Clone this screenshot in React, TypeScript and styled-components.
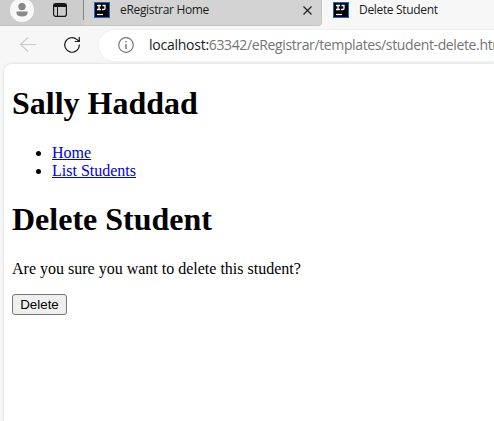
import React from "react";
import styled, { createGlobalStyle } from "styled-components";

const GlobalStyle = createGlobalStyle`
  body { margin: 0; background: #f7f7f7; overflow: hidden; }
`;

const Browser = styled.div`
  width: 494px;
  height: 421px;
  overflow: hidden;
  display: flex;
  flex-direction: column;
  background: #f7f7f7;
  font-family: "Open Sans", "Noto Sans", sans-serif;
  svg { display: block; flex: none; }
`;

const TabStrip = styled.div`
  display: flex;
  height: 26px;
  flex: none;
  background: #f7f7f7;
`;

const StripTools = styled.div`
  box-sizing: border-box;
  display: flex;
  width: 84px;
  background: #cdcdcd;
  border-bottom: 1px solid #c3c3c3;
  padding-left: 10px;
  gap: 18px;
`;

const Tab = styled.div<{ $active?: boolean }>`
  box-sizing: border-box;
  display: flex;
  width: ${(p) => (p.$active ? "172px" : "238px")};
  padding: 0 8px 0 ${(p) => (p.$active ? "11px" : "10px")};
  background: ${(p) => (p.$active ? "#f7f7f7" : "#d3d3d3")};
  border-bottom: 1px solid ${(p) => (p.$active ? "#f7f7f7" : "#c3c3c3")};
  border-right: ${(p) => (p.$active ? "none" : "1px solid #c5c5c5")};
  border-bottom-right-radius: ${(p) => (p.$active ? "0" : "4px")};
`;

const Divider = styled.div`
  width: 1px;
  height: 20px;
  margin-left: -11px;
  margin-right: 10px;
  background: #858585;
`;

const TabTitle = styled.span`
  flex: 1;
  margin-left: 10px;
  font-size: 12px;
  line-height: 20px;
  letter-spacing: -0.33px;
  color: #1c1c1c;
  white-space: nowrap;
`;

const Toolbar = styled.div`
  display: flex;
  align-items: center;
  height: 38px;
  flex: none;
  padding-left: 19px;
`;

const AddressBar = styled.div`
  box-sizing: border-box;
  display: flex;
  align-items: center;
  width: 420px;
  height: 31px;
  flex: none;
  margin-left: 18px;
  padding-left: 18px;
  border-radius: 16px;
  background: #fff;
  box-shadow: 0 0 2px #e4e4e4;
`;

const Url = styled.span`
  margin-left: 14px;
  font-size: 14px;
  line-height: 20px;
  letter-spacing: -0.37px;
  white-space: nowrap;
  color: #747474;
`;

const Host = styled.span`
  letter-spacing: -0.25px;
  color: #1b1b1b;
`;

const Page = styled.main`
  flex: 1;
  margin-left: 4px;
  padding: 0 8px;
  border-radius: 8px 0 0 0;
  background: #fff;
  box-shadow: 0 0 3px #cfcfcf;
  font: 16px "Liberation Serif", serif;
  color: #000;
`;

const Heading = styled.h1`
  margin: 21.44px 0;
  font-size: 32px;
  line-height: 37px;
  font-weight: bold;
`;

const Links = styled.ul`
  margin: 0;
  padding-left: 40px;
  line-height: 18px;
`;

const Link = styled.a`
  color: #0000d8;
  text-decoration: underline;
`;

const Question = styled.p`
  margin: 0 0 16px;
  line-height: 18px;
`;

const DeleteButton = styled.button`
  box-sizing: border-box;
  display: block;
  width: 55px;
  height: 21px;
  padding: 1px 0 0;
  border: 1px solid #767676;
  border-radius: 3px;
  background: #efefef;
  color: #000;
  font: 13.333px/18px "Liberation Sans", sans-serif;
`;

const ProfileIcon = () => (
  <svg width="24" height="25" viewBox="0 0 24 25">
    <circle cx="12" cy="10" r="12" fill="#f8f8f8" />
    <circle cx="12" cy="6.6" r="3.7" fill="#888" />
    <path d="M6.5 11.5h11v1.200c0 2.600-2 3.800-5.500 3.800s-5.500-1.200-5.500-3.800z" fill="#888" />
  </svg>
);

const WorkspaceIcon = () => (
  <svg width="16" height="20" viewBox="0 0 16 20" fill="none" stroke="#161616">
    <rect x="1.600" y="3.600" width="12.800" height="12.800" rx="2.200" strokeWidth="1.200" />
    <path d="M2 5.500h12" strokeWidth="3" />
    <path d="M5.500 6v10" />
  </svg>
);

const IdeIcon = () => (
  <svg width="16" height="20" viewBox="0 0 16 20">
    <rect x=".5" y="2.500" width="15" height="15" fill="#030308" stroke="#1769bd" />
    <path d="M3 5.500h4M5 5.500v4M3 9.500h4M8.500 5.500h2.500v2.700q0 1.300-1.400 1.300H8" fill="none" stroke="#fff" strokeWidth="1.300" />
    <path d="M3 14.500h6" stroke="#fff" strokeWidth="1.200" />
  </svg>
);

const CloseIcon = () => (
  <svg width="10" height="20" viewBox="0 0 10 20" fill="none" stroke="#222" strokeWidth="1.200">
    <path d="m.5 6.500 8 8m0-8-8 8" />
  </svg>
);

const BackIcon = () => (
  <svg width="18" height="18" viewBox="0 0 18 18" fill="none" stroke="#cbcbcb" strokeWidth="1.100">
    <path d="M17 8.500H1.500M9 1.500l-7.500 7L9 15.500" />
  </svg>
);

const ReloadSvg = styled.svg`
  margin-left: 26px;
`;

const ReloadIcon = () => (
  <ReloadSvg width="18" height="18" viewBox="0 0 18 18" fill="none" stroke="#1c1c1c" strokeWidth="1.200">
    <path d="M16.300 8.600A7.300 7.300 0 1 1 13.800 3.400L16.300 5.500M16.300 1v4.500h-4.500" />
  </ReloadSvg>
);

const InfoIcon = () => (
  <svg width="18" height="18" viewBox="0 0 18 18" fill="none" stroke="#777">
    <circle cx="9" cy="9" r="7.300" strokeWidth="1.200" />
    <path d="M9 8v5M9 5v1.400" strokeWidth="1.400" />
  </svg>
);

export default function App() {
  return (
    <>
      <GlobalStyle />
      <Browser>
        <TabStrip>
          <StripTools>
            <ProfileIcon />
            <WorkspaceIcon />
          </StripTools>
          <Tab>
            <Divider />
            <IdeIcon />
            <TabTitle>eRegistrar Home</TabTitle>
            <CloseIcon />
          </Tab>
          <Tab $active>
            <IdeIcon />
            <TabTitle>Delete Student</TabTitle>
          </Tab>
        </TabStrip>
        <Toolbar>
          <BackIcon />
          <ReloadIcon />
          <AddressBar>
            <InfoIcon />
            <Url>
              <Host>localhost:</Host>63342/eRegistrar/templates/student-delete.htm
            </Url>
          </AddressBar>
        </Toolbar>
        <Page>
          <Heading>Sally Haddad</Heading>
          <Links>
            <li><Link href="#">Home</Link></li>
            <li><Link href="#">List Students</Link></li>
          </Links>
          <Heading>Delete Student</Heading>
          <Question>Are you sure you want to delete this student?</Question>
          <DeleteButton type="button">Delete</DeleteButton>
        </Page>
      </Browser>
    </>
  );
}
